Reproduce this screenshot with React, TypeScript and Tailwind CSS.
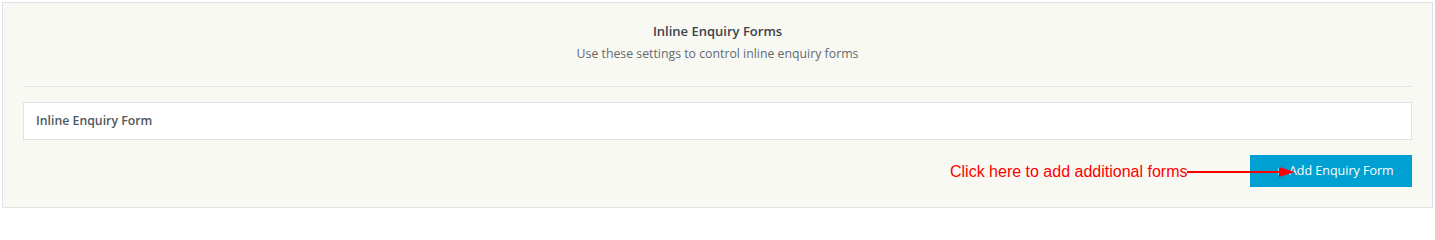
export default function App() {
  return (
    <div className="w-[1435px] h-[210px] bg-white pt-[2px] pl-[2px] pr-[2px]" style={{ fontFamily: '"Open Sans", sans-serif' }}>
      <div className="w-[1431px] h-[206px] border border-[#dde3e6] bg-[#f9f9f4] px-[20px] flex flex-col">
        {/* Header */}
        <div className="flex flex-col items-center pt-[19px] pb-[23px] border-b border-[#dde3e6]">
          <h2 className="text-[13px] leading-[18px] font-semibold text-[#3c434a]">Inline Enquiry Forms</h2>
          <p className="text-[12.3px] leading-[18px] text-[#646970] mt-[5px]">
            Use these settings to control inline enquiry forms
          </p>
        </div>

        {/* Form row */}
        <div className="mt-[15px] h-[38px] bg-white border border-[#dde3e6] flex items-center px-[12px]">
          <span className="text-[12.3px] font-semibold text-[#50575e]">Inline Enquiry Form</span>
        </div>

        {/* Footer */}
        <div className="mt-[15px] flex justify-end items-center relative">
          <span
            className="absolute left-[927px] top-[7px] text-[16px] leading-[20px] text-[#ff0000]"
            style={{ fontFamily: '"Liberation Sans", Arial, sans-serif' }}
          >
            Click here to add additional forms
          </span>
          <button className="w-[162px] h-[32px] bg-[#00a0d2] text-white text-[12.5px] flex items-center justify-center gap-[6px] pl-[6px]">
            <span className="text-[15px] leading-none font-light">+</span>
            <span>Add Enquiry Form</span>
          </button>
          <svg className="absolute left-[1164px] top-[11px]" width="112" height="12" viewBox="0 0 112 12">
            <line x1="0" y1="6" x2="94" y2="6" stroke="#ff0000" strokeWidth="2" />
            <polygon points="92,1 108,6 92,11" fill="#ff0000" />
          </svg>
        </div>
      </div>
    </div>
  );
}
